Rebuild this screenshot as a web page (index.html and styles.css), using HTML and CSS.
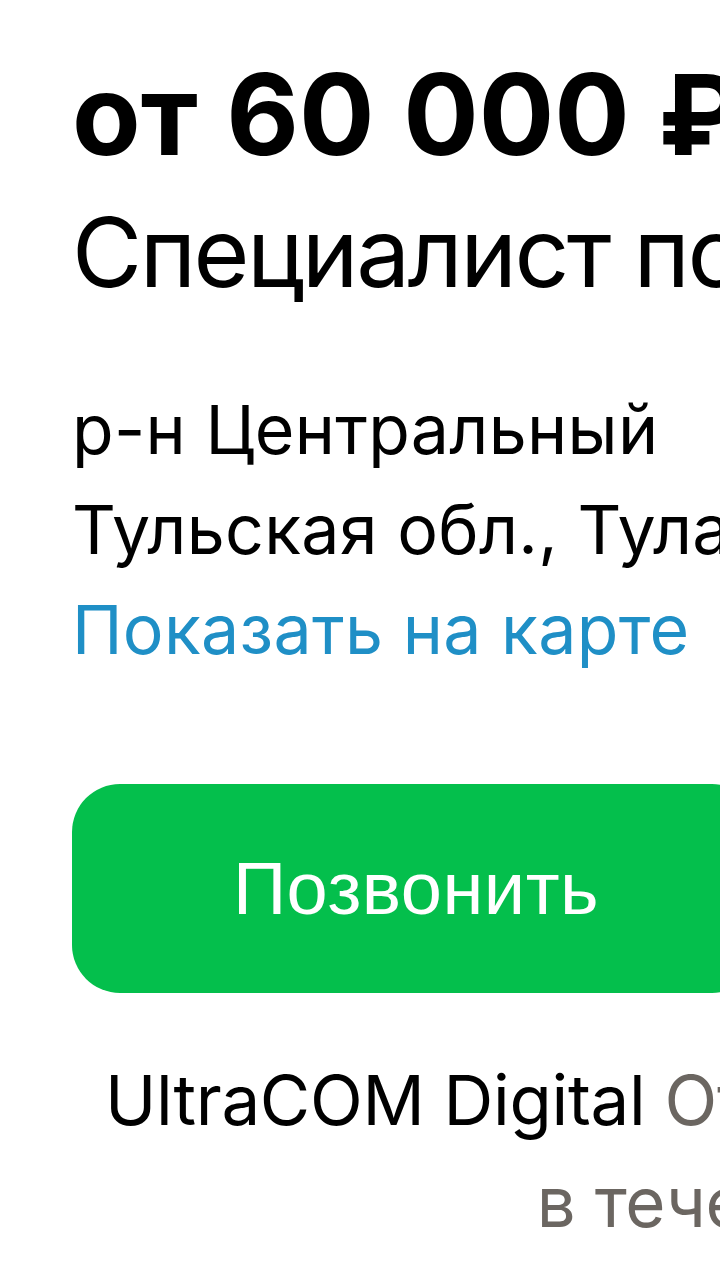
FILE: index.html
```html
<!DOCTYPE html>
<html lang="ru">
<head>
<meta charset="utf-8">
<title>Объявление</title>
<link rel="stylesheet" href="styles.css">
</head>
<body>
<main class="page">
  <h1 class="price">от 60 000 ₽ в месяц</h1>
  <h2 class="title">Специалист по продажам</h2>
  <div class="address">
    <div class="address-line">р-н Центральный</div>
    <div class="address-line">Тульская обл., Тула</div>
    <a class="map-link" href="#">Показать на карте</a>
  </div>
  <button class="call-btn" type="button">Позвонить</button>
  <p class="company">UltraCOM Digital <span class="muted">Отвечает на сообщения</span><br><span class="muted">в течение часа</span></p>
</main>
</body>
</html>
```
FILE: styles.css
```css
html, body {
  margin: 0;
  padding: 0;
  background: #ffffff;
  overflow: hidden;
}

.page {
  width: 832px;
  box-sizing: border-box;
  padding: 47px 72px 0 72px;
  font-family: Inter, "Noto Sans", sans-serif;
  color: #000000;
  white-space: nowrap;
}

.price {
  margin: 0;
  font-size: 112px;
  font-weight: 700;
  line-height: 1.2;
  letter-spacing: 0;
  word-spacing: 2px;
}

.title {
  margin: 14px 0 0 0;
  font-size: 96px;
  font-weight: 400;
  line-height: 1.2;
  letter-spacing: -2.5px;
}

.address {
  margin-top: 68px;
  font-size: 68px;
  line-height: 100px;
  letter-spacing: 0.3px;
  display: flex;
  flex-direction: column;
}

.address-line {
  color: #000000;
}

.map-link {
  color: #1f8fc6;
  text-decoration: none;
}

.call-btn {
  display: flex;
  align-items: center;
  justify-content: center;
  margin-top: 105px;
  width: 688px;
  height: 209px;
  border: none;
  border-radius: 48px;
  background: #04bf4c;
  color: #ffffff;
  font-family: "Liberation Sans", Arial, sans-serif;
  font-size: 74px;
  font-weight: 400;
  letter-spacing: 0.5px;
  padding: 0;
}

.company {
  display: inline-block;
  margin: 56px 0 0 33px;
  font-size: 69px;
  line-height: 102px;
  letter-spacing: -0.3px;
  text-align: center;
}

.muted {
  color: #6b6661;
}
```
